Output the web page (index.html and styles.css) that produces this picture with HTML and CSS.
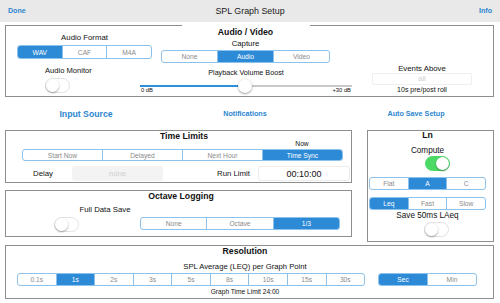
FILE: index.html
```html
<!DOCTYPE html>
<html lang="en">
<head>
    <meta charset="UTF-8">
    <meta name="viewport" content="width=device-width, initial-scale=1.0">
    <title>SPL Graph Setup</title>
    <link rel="stylesheet" href="styles.css">
</head>
<body>
    <header class="topbar">
        <span class="bar-btn">Done</span>
        <span class="bar-title">SPL Graph Setup</span>
        <span class="bar-btn bar-right">Info</span>
    </header>

    <main class="page">
        <section class="panel av">
            <div class="av-top">
                <div class="av-format">
                    <div class="label">Audio Format</div>
                    <div class="seg seg-format"><span class="on">WAV</span><span>CAF</span><span>M4A</span></div>
                </div>
                <div class="av-capture">
                    <h2 class="av-title">Audio / Video</h2>
                    <div class="label">Capture</div>
                    <div class="seg seg-capture"><span>None</span><span class="on">Audio</span><span>Video</span></div>
                </div>
            </div>
            <div class="av-bottom">
                <div class="monitor">
                    <div class="label">Audio Monitor</div>
                    <div class="toggle"></div>
                </div>
                <div class="boost">
                    <div class="label">Playback Volume Boost</div>
                    <div class="slider"><span class="knob"></span></div>
                    <div class="scale"><span>0 dB</span><span>+30 dB</span></div>
                </div>
                <div class="events">
                    <div class="label">Events Above</div>
                    <div class="events-field">all</div>
                    <div class="events-note">10s pre/post roll</div>
                </div>
            </div>
        </section>

        <nav class="links">
            <span class="link link-big">Input Source</span>
            <span class="link">Notifications</span>
            <span class="link link-last">Auto Save Setup</span>
        </nav>

        <div class="mid">
            <div class="mid-left">
                <section class="panel time">
                    <h2 class="title time-title">Time Limits</h2>
                    <div class="now-row"><span class="now">Now</span></div>
                    <div class="seg seg-time">
                        <span>Start Now</span><span>Delayed</span><span>Next Hour</span><span class="on">Time Sync</span>
                    </div>
                    <div class="delay-row">
                        <span class="delay-label">Delay</span>
                        <span class="field field-off">none</span>
                        <span class="run-label">Run Limit</span>
                        <span class="field field-time">00:10:00</span>
                    </div>
                </section>

                <section class="panel octave">
                    <h2 class="title oct-title">Octave Logging</h2>
                    <div class="oct-row">
                        <div class="oct-left">
                            <div class="label oct-label">Full Data Save</div>
                            <div class="toggle oct-toggle"></div>
                        </div>
                        <div class="seg seg-oct"><span>None</span><span>Octave</span><span class="on">1/3</span></div>
                    </div>
                </section>
            </div>

            <section class="panel ln">
                <h2 class="title ln-title">Ln</h2>
                <div class="ln-label compute">Compute</div>
                <div class="toggle on ln-toggle"></div>
                <div class="seg seg-ln seg-weight"><span>Flat</span><span class="on">A</span><span>C</span></div>
                <div class="seg seg-ln seg-speed"><span class="on">Leq</span><span>Fast</span><span>Slow</span></div>
                <div class="ln-label save">Save 50ms LAeq</div>
                <div class="toggle save-toggle"></div>
            </section>
        </div>

        <section class="panel res">
            <h2 class="title res-title">Resolution</h2>
            <div class="res-sub">SPL Average (LEQ) per Graph Point</div>
            <div class="res-row">
                <div class="seg seg-res">
                    <span>0.1s</span><span class="on">1s</span><span>2s</span><span>3s</span><span>5s</span><span>8s</span><span>10s</span><span>15s</span><span>30s</span>
                </div>
                <div class="seg seg-unit"><span class="on">Sec</span><span>Min</span></div>
            </div>
            <div class="res-note">Graph Time Limit 24:00</div>
        </section>
    </main>
</body>
</html>
```

FILE: styles.css
```css
* {
    margin: 0;
    padding: 0;
    box-sizing: border-box;
}

body {
    font-family: "Liberation Sans", Arial, sans-serif;
    color: #111;
    background: #fff;
    width: 500px;
    height: 303px;
    overflow: hidden;
}

/* top bar */
.topbar {
    height: 22px;
    background: #e9e9e9;
    display: grid;
    grid-template-columns: 1fr auto 1fr;
    align-items: center;
    padding: 0 8px;
}

.bar-btn {
    color: #2f86d0;
    font-weight: bold;
    font-size: 7.1px;
}

.bar-right {
    text-align: right;
}

.bar-title {
    font-size: 8.9px;
    color: #222;
}

.page {
    padding: 3px 6px 0 5px;
}

.panel {
    border: 1px solid #8e8e8e;
    background: #fff;
}

.title {
    font-size: 8.7px;
    font-weight: bold;
    text-align: center;
}

.label {
    font-size: 7.8px;
    line-height: 10px;
}

/* segmented controls */
.seg {
    display: flex;
    border: 1px solid #8cc2ec;
    border-radius: 3px;
    overflow: hidden;
    background: #fff;
}

.seg span {
    flex: 1;
    display: flex;
    align-items: center;
    justify-content: center;
    font-size: 6.7px;
    color: #8a8a8a;
    border-left: 1px solid #8cc2ec;
}

.seg span:first-child {
    border-left: none;
}

.seg .on {
    background: #2d8ad6;
    color: #fff;
}

/* switches */
.toggle {
    width: 25px;
    height: 15px;
    border-radius: 8px;
    border: 1px solid #e2e2e2;
    background: #fff;
    position: relative;
}

.toggle::after {
    content: '';
    position: absolute;
    top: 0;
    left: 0;
    width: 13px;
    height: 13px;
    border-radius: 50%;
    background: #fff;
    box-shadow: 0 1px 2px rgba(0, 0, 0, 0.35);
}

.toggle.on {
    background: #4cd964;
    border-color: #4cd964;
}

.toggle.on::after {
    left: auto;
    right: 0;
}

/* audio / video */
.av {
    height: 72px;
}

.av-top,
.av-bottom {
    display: flex;
}

.av-format {
    margin-left: 11px;
    width: 135px;
    padding-top: 7px;
    text-align: center;
}

.seg-format {
    margin-top: 2px;
    height: 14px;
}

.av-capture {
    margin-left: 9px;
    width: 169px;
    text-align: center;
}

.av-title {
    width: 128px;
    margin: -1px auto 0;
    background: #fff;
    font-size: 8.7px;
    font-weight: bold;
    line-height: 14px;
}

.seg-capture {
    margin-top: 1px;
    height: 13px;
}

.monitor {
    margin-left: 39px;
    width: 95px;
    padding-top: 3px;
}

.monitor .label {
    font-size: 7.6px;
}

.monitor .toggle {
    margin-top: 2px;
}

.boost {
    width: 212px;
    padding-top: 5px;
    text-align: center;
}

.boost .label {
    font-size: 7.2px;
}

.slider {
    position: relative;
    height: 8px;
    margin-top: 1px;
}

.slider::before {
    content: '';
    position: absolute;
    left: 0;
    right: 0;
    top: 6px;
    height: 1.5px;
    background: linear-gradient(90deg, #2f8fd8 0%, #2f8fd8 50%, #c9c9c9 50%);
}

.knob {
    position: absolute;
    left: 98px;
    top: 0;
    width: 14px;
    height: 14px;
    border-radius: 50%;
    background: #fff;
    box-shadow: 0 1px 2px rgba(0, 0, 0, 0.35), 0 0 0 0.5px rgba(0, 0, 0, 0.08);
}

.scale {
    display: flex;
    justify-content: space-between;
    font-size: 5.8px;
    line-height: 7px;
    padding: 0 1px;
}

.events {
    margin-left: 20px;
    width: 100px;
    padding-top: 1px;
    text-align: center;
}

.events .label {
    line-height: 9px;
}

.events-field {
    height: 12px;
    border: 1px solid #efefef;
    border-radius: 2px;
    color: #cfcfcf;
    font-size: 7.5px;
    line-height: 10px;
}

.events-note {
    font-size: 7px;
    line-height: 10px;
}

/* links */
.links {
    height: 33px;
    display: grid;
    grid-template-columns: 162px 156px 1fr;
    align-items: center;
    text-align: center;
}

.link {
    color: #2b86d0;
    font-weight: bold;
    font-size: 7.2px;
}

.link-big {
    font-size: 8.7px;
}

.link-last {
    padding-left: 15px;
}

/* middle block */
.mid {
    display: flex;
    gap: 15px;
}

.mid-left {
    width: 347px;
}

.time {
    height: 53px;
}

.time-title {
    line-height: 11px;
    padding-left: 11px;
}

.now-row {
    display: grid;
    grid-template-columns: repeat(4, 80px);
    margin: -2px 0 0 16px;
    font-size: 6.7px;
    line-height: 7px;
}

.now {
    grid-column: 4;
    text-align: center;
}

.seg-time {
    margin: 2px 0 0 16px;
    width: 321px;
    height: 12px;
}

.delay-row {
    display: flex;
    align-items: center;
    height: 15px;
    margin-top: 5px;
    font-size: 7.8px;
}

.delay-label {
    width: 39px;
    margin-left: 27px;
}

.field {
    height: 15px;
    display: flex;
    align-items: center;
    justify-content: center;
    border-radius: 3px;
}

.field-off {
    width: 91px;
    background: #f3f3f3;
    color: #cfcfcf;
}

.run-label {
    flex: 1;
    text-align: right;
    padding-right: 8px;
}

.field-time {
    width: 92px;
    margin-right: 1px;
    border: 1px solid #ececec;
    font-size: 9px;
}

.octave {
    height: 47px;
    margin-top: 7px;
}

.oct-title {
    line-height: 11px;
    padding-left: 5px;
}

.oct-row {
    display: flex;
    margin-top: 3px;
}

.oct-left {
    width: 134px;
}

.oct-label {
    padding-left: 64px;
    text-align: center;
}

.oct-toggle {
    margin: 2px 0 0 48px;
}

.seg-oct {
    width: 200px;
    height: 13px;
    margin-top: 12px;
}

/* Ln */
.ln {
    width: 127px;
    height: 112px;
    padding-left: 1px;
}

.ln > * {
    width: 117px;
}

.ln-title {
    line-height: 9px;
}

.ln-label {
    text-align: center;
    font-size: 8.2px;
}

.compute {
    margin-top: 5px;
    line-height: 11px;
}

.ln > .toggle {
    width: 25px;
}

.ln-toggle {
    margin-left: 56px;
}

.seg-ln {
    height: 13px;
}

.seg-weight {
    margin-top: 6px;
}

.seg-speed {
    margin-top: 7px;
}

.save {
    margin-top: 1px;
    line-height: 10px;
}

.save-toggle {
    margin: 1px 0 0 55px;
}

/* resolution */
.res {
    height: 54px;
    margin-top: 3px;
    text-align: center;
}

.res-title {
    line-height: 10px;
    padding-right: 9px;
}

.res-sub {
    margin-top: 6px;
    font-size: 7.7px;
    line-height: 10px;
    padding-right: 9px;
}

.res-row {
    display: flex;
    margin-top: 1px;
}

.seg-res {
    margin-left: 11px;
    width: 348px;
    height: 13px;
}

.seg-unit {
    margin-left: 13px;
    width: 99px;
    height: 13px;
}

.res-note {
    margin-top: 1px;
    font-size: 6.6px;
    line-height: 10px;
    padding-right: 9px;
}
```
